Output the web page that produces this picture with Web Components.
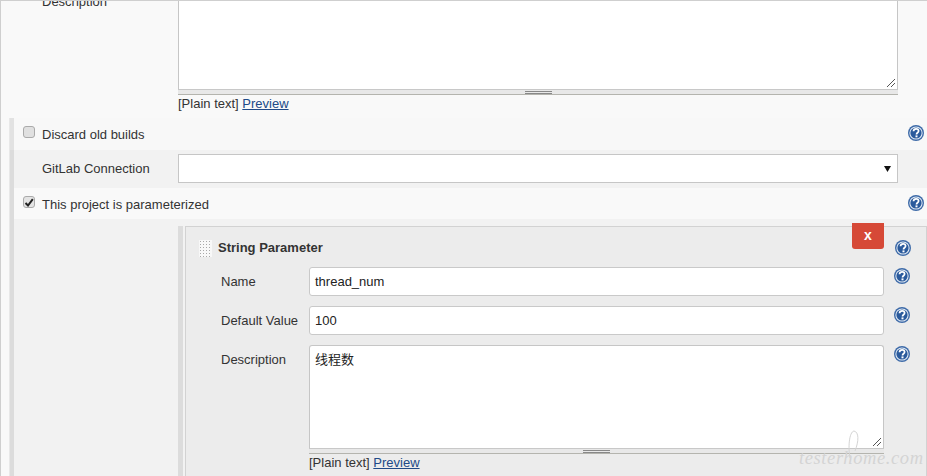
<!DOCTYPE html>
<html lang="en">
<head>
<meta charset="utf-8">
<title>Job configuration</title>
<style>
  html, body { margin: 0; background: #f9f9f9; }
  body { font: 13px "Liberation Sans", Arial, sans-serif; color: #333; }
</style>
</head>
<body>
<jk-page>
  <jk-row variant="top" label="Description">
    <jk-editor height="110"></jk-editor>
  </jk-row>

  <jk-section>
    <jk-check-row label="Discard old builds"></jk-check-row>
    <jk-row variant="band" label="GitLab Connection">
      <jk-select></jk-select>
    </jk-row>
    <jk-check-row label="This project is parameterized" checked></jk-check-row>
    <jk-block>
      <jk-repeatable heading="String Parameter">
        <jk-param label="Name"><jk-textbox value="thread_num"></jk-textbox></jk-param>
        <jk-param label="Default Value"><jk-textbox value="100"></jk-textbox></jk-param>
        <jk-param label="Description"><jk-editor height="103" value="线程数"></jk-editor></jk-param>
      </jk-repeatable>
    </jk-block>
  </jk-section>
</jk-page>

<script>
/**
 * Builds a template from a markup string.
 *
 * @param {string} html The markup.
 * @returns {HTMLTemplateElement} The template.
 */
function tpl (html) {
  const t = document.createElement('template')
  t.innerHTML = html
  return t
}

/**
 * Base class, attaches the open shadow root.
 */
class Base extends HTMLElement {
  constructor (template) {
    super()
    this.attachShadow({ mode: 'open' }).appendChild(template.content.cloneNode(true))
  }
}

customElements.define('jk-help', class extends Base {
  constructor () {
    super(tpl(`
      <style>
        :host { display: block; width: 16px; height: 16px; flex: none; }
        svg { display: block; }
      </style>
      <svg width="16" height="16" viewBox="0 0 16 16">
        <circle cx="8" cy="8" r="8" fill="#3d6aa8"/>
        <circle cx="8" cy="8" r="6.6" fill="#e4ecf5"/>
        <circle cx="8" cy="8" r="5.600" fill="#2a5a9c"/>
        <path d="M5.500 6.200C5.600 4.600 6.700 3.800 8.100 3.800c1.500 0 2.500.9 2.500 2.100 0 2-2.100 1.700-2.100 3.500" fill="none" stroke="#fff" stroke-width="1.700"/>
        <rect x="7.500" y="10.400" width="2" height="1.900" fill="#fff"/>
      </svg>`))
  }
})

customElements.define('jk-editor', class extends Base {
  constructor () {
    super(tpl(`
      <style>
        :host { display: block; }
        .area {
          position: relative; box-sizing: border-box; background: #fff;
          border: 1px solid #c6c6c6; border-bottom: 0; border-radius: 3px 3px 0 0;
          padding: 6px 5px; font: 13px "Liberation Sans", "Noto Sans CJK SC", sans-serif; color: #222;
          line-height: 15px;
        }
        .corner { position: absolute; right: 1px; bottom: 1px; }
        .grip {
          box-sizing: border-box; height: 6px; background: #e8e8e8;
          border-top: 1px solid #c8c8c8; border-bottom: 1px solid #b4b4ae;
          display: flex; justify-content: center; align-items: center;
        }
        .grip i { display: block; width: 27px; height: 3px; border-top: 1px solid #888; border-bottom: 1px solid #888; box-sizing: border-box; }
        .note { margin-top: 1px; line-height: 15px; color: #333; }
        a { color: #204a87; text-decoration: underline; }
      </style>
      <div class="area"><span id="text"></span>
        <svg class="corner" width="10" height="10" viewBox="0 0 10 10">
          <path d="M1 9 9 1M5 9 9 5" stroke="#555" stroke-width="1" fill="none"/>
        </svg>
      </div>
      <div class="grip"><i></i></div>
      <div class="note">[Plain text] <a href="#">Preview</a></div>`))
    this.shadowRoot.querySelector('.area').style.height = `${this.getAttribute('height')}px`
    this.shadowRoot.querySelector('#text').textContent = this.getAttribute('value') || ''
  }
})

customElements.define('jk-select', class extends Base {
  constructor () {
    super(tpl(`
      <style>
        :host { display: block; }
        div {
          box-sizing: border-box; height: 29px; background: #fff; border: 1px solid #c6c6c6;
          display: flex; align-items: center; justify-content: flex-end; padding-right: 6px;
        }
        svg { display: block; }
      </style>
      <div><svg width="7" height="6" viewBox="0 0 7 6"><path d="M0 0h7L3.500 6z" fill="#111"/></svg></div>`))
  }
})

customElements.define('jk-textbox', class extends Base {
  constructor () {
    super(tpl(`
      <style>
        :host { display: block; }
        div {
          box-sizing: border-box; height: 29px; background: #fff; border: 1px solid #c9c9c9;
          border-radius: 3px; padding: 0 5px; line-height: 27px; color: #222;
          font: 13px/27px "Liberation Sans", sans-serif;
        }
      </style>
      <div></div>`))
    this.shadowRoot.querySelector('div').textContent = this.getAttribute('value')
  }
})

customElements.define('jk-row', class extends Base {
  constructor () {
    super(tpl(`
      <style>
        :host { display: grid; grid-template-columns: 136px 720px 16px; column-gap: 0; padding: 0 3px 0 42px; }
        :host([variant="top"]) { margin-top: -22px; height: 139px; box-sizing: border-box; padding-left: 41px; grid-template-columns: 136px 720px; }
        :host([variant="top"]) .label { padding-top: 15px; }
        :host([variant="band"]) {
          margin-left: -4px; border-left: 4px solid #dcdcdc; background: #f2f2f2;
          height: 38px; box-sizing: border-box; padding: 4px 0 0 28px; grid-template-columns: 136px 720px;
        }
        :host([variant="band"]) .label { line-height: 29px; }
      </style>
      <div class="label"></div>
      <div><slot></slot></div>`))
    this.shadowRoot.querySelector('.label').textContent = this.getAttribute('label')
  }
})

customElements.define('jk-check-row', class extends Base {
  constructor () {
    super(tpl(`
      <style>
        :host {
          display: flex; align-items: center; box-sizing: border-box; height: 32px;
          margin-left: -4px; border-left: 4px solid #e2e2e2; background: #f8f8f8; padding: 0 3px 0 9px;
        }
        :host([checked]) { height: 31px; border-left-color: #dcdcdc; background: #f9f9f9; }
        .box {
          box-sizing: border-box; width: 12px; height: 12px; border: 1px solid #aaa; border-radius: 3px;
          background: #e0e0e0; margin-right: 7px; display: flex; align-items: center; justify-content: center;
          margin-top: -5px;
        }
        :host([checked]) .box { margin-top: -3px; background: #e4e4e4; }
        :host([checked]) .text { margin-top: 2px; }
        .text { flex: 1; }
        jk-help { margin-top: -2px; }
        svg { display: none; }
        :host([checked]) svg { display: block; }
      </style>
      <span class="box"><svg width="10" height="9" viewBox="0 0 10 9"><path d="M1.500 5 4 7.500 8.800 1.200" fill="none" stroke="#222" stroke-width="2"/></svg></span>
      <span class="text"></span>
      <jk-help></jk-help>`))
    this.shadowRoot.querySelector('.text').textContent = this.getAttribute('label')
  }
})

customElements.define('jk-param', class extends Base {
  constructor () {
    super(tpl(`
      <style>
        :host { display: grid; grid-template-columns: 88px 575px 16px; column-gap: 0; padding-left: 35px; margin-bottom: 10px; }
        .label { line-height: 29px; }
        jk-help { margin: 1px 0 0 10px; }
      </style>
      <div class="label"></div>
      <div><slot></slot></div>
      <jk-help></jk-help>`))
    this.shadowRoot.querySelector('.label').textContent = this.getAttribute('label')
  }
})

customElements.define('jk-repeatable', class extends Base {
  constructor () {
    super(tpl(`
      <style>
        :host {
          display: block; position: relative; box-sizing: border-box; height: 300px;
          margin-left: 164px; border-left: 5px solid #dcdcdc; padding-left: 2px;
        }
        .panel { box-sizing: border-box; height: 100%; background: #ececec; border: 1px solid #d2d2d2; border-right-width: 1px; }
        .head { display: flex; align-items: center; height: 40px; padding-left: 13px; }
        .dots {
          width: 13px; height: 17px; margin-right: 6px; margin-top: 2px;
          background-color: #f8f8f8;
          background-image: radial-gradient(#a8a8a8 42%, transparent 47%);
          background-size: 3px 3px;
        }
        .title { font-weight: bold; margin-top: 1px; }
        .x {
          position: absolute; top: -3px; right: 43px; width: 32px; height: 26px;
          background: #d64937; color: #fff; font-weight: bold; font-size: 14px;
          border-radius: 0 0 3px 3px; text-align: center; line-height: 24px;
        }
        jk-help { position: absolute; top: 14px; right: 16px; }
      </style>
      <div class="panel">
        <div class="head"><span class="dots"></span><span class="title"></span></div>
        <slot></slot>
      </div>
      <div class="x">x</div>
      <jk-help></jk-help>`))
    this.shadowRoot.querySelector('.title').textContent = this.getAttribute('heading')
  }
})

customElements.define('jk-block', class extends Base {
  constructor () {
    super(tpl(`
      <style>
        :host {
          display: block; margin-left: -4px; border-left: 4px solid #dcdcdc; background: #f2f2f2;
          padding-top: 7px;
        }
      </style>
      <slot></slot>`))
  }
})

customElements.define('jk-section', class extends Base {
  constructor () {
    super(tpl(`
      <style>
        :host { display: block; margin-left: 8px; border-left: 5px solid #e8e8e8; }
      </style>
      <slot></slot>`))
  }
})

customElements.define('jk-page', class extends Base {
  constructor () {
    super(tpl(`
      <style>
        :host {
          display: block; position: relative; box-sizing: border-box; width: 927px; height: 476px; overflow: hidden;
          border-top: 1px solid #cfcfcf; border-left: 1px solid #cfcfcf; background: #f9f9f9;
        }
        .mark {
          position: absolute; left: 798px; top: 446px; color: #d4d4d4;
          font: italic 18.500px "Liberation Serif", serif; letter-spacing: .6px; line-height: 22px; white-space: nowrap;
        }
        .loop { position: absolute; left: 846px; top: 429px; }
      </style>
      <slot></slot>
      <svg class="loop" width="14" height="30" viewBox="0 0 14 30"><path d="M3 28C1 18 2 2 7 1c5 1 5 10 1 20" fill="none" stroke="#d4d4d4" stroke-width="1"/></svg>
      <div class="mark">testerhome.com</div>`))
  }
})
</script>
</body>
</html>
